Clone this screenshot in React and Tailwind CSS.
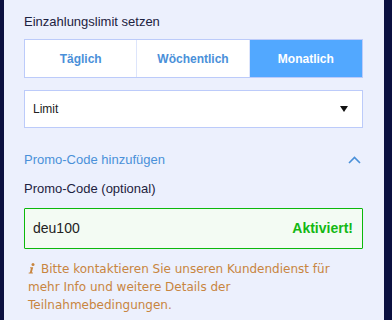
export default function App() {
  const tabs = ["Täglich", "Wöchentlich", "Monatlich"];
  const active = 2;

  return (
    <div className="h-[320px] w-[392px] overflow-hidden bg-[#0b1040] flex" style={{ fontFamily: "'Liberation Sans', Arial, sans-serif" }}>
      <div className="ml-[4px] w-[380px] h-full bg-[#ecf0fd] px-[20px] pt-[13px]">
        {/* Deposit limit */}
        <h3 className="text-[13px] leading-[18px] text-[#1d2240]">Einzahlungslimit setzen</h3>

        <div className="mt-[8px] grid grid-cols-3 h-[39px] w-[339px] border border-[#bccbfa] bg-white">
          {tabs.map((t, i) => (
            <button
              key={t}
              className={
                i === active
                  ? "bg-[#52a8ff] text-white font-bold text-[12px]"
                  : "bg-white text-[#4a90d9] font-bold text-[12px] border-r border-[#dde5fb]"
              }
            >
              {t}
            </button>
          ))}
        </div>

        <div className="mt-[12px] h-[38px] w-[339px] border border-[#bccbfa] bg-white flex items-center justify-between pl-[8px] pr-[14px]">
          <span className="text-[12px] text-[#222]">Limit</span>
          <svg width="8" height="6" viewBox="0 0 8 6">
            <path d="M0 0 L8 0 L4 6 Z" fill="#111" />
          </svg>
        </div>

        {/* Promo code */}
        <div className="mt-[22px] flex items-center justify-between w-[339px] pr-[2px]">
          <span className="text-[13px] font-medium text-[#4a90d9]">Promo-Code hinzufügen</span>
          <svg width="13" height="8" viewBox="0 0 13 8">
            <path d="M1 7 L6.5 1.5 L12 7" fill="none" stroke="#4a90d9" strokeWidth="1.6" />
          </svg>
        </div>

        <div className="mt-[10px] text-[13px] leading-[18px] text-[#1d2240]">Promo-Code (optional)</div>

        <div className="mt-[10px] h-[41px] w-[339px] border border-[#0cb80c] rounded-[1px] bg-[#f3fbf3] flex items-center justify-between pl-[8px] pr-[9px]">
          <span className="text-[14px] text-[#222]">deu100</span>
          <span className="text-[14px] font-bold text-[#13b813]">Aktiviert!</span>
        </div>

        <p className="mt-[11px] w-[332px] pl-[4px] text-[12px] leading-[18px] text-[#c8853f]" style={{ fontFamily: "'DejaVu Sans', Verdana, sans-serif" }}>
          {/* info icon */}
          <svg className="inline-block align-[-1px] mr-[6px]" width="7" height="11" viewBox="0 0 7 11">
            <circle cx="5" cy="1.6" r="1.5" fill="#c8853f" />
            <path d="M2.2 4.2 H5.2 L3.8 9.4 H5 L4.8 10.5 H0.6 L0.8 9.4 H1.9 L2.9 5.3 H2 Z" fill="#c8853f" />
          </svg>
          Bitte kontaktieren Sie unseren Kundendienst für mehr Info und weitere Details der Teilnahmebedingungen.
        </p>
      </div>
    </div>
  );
}
